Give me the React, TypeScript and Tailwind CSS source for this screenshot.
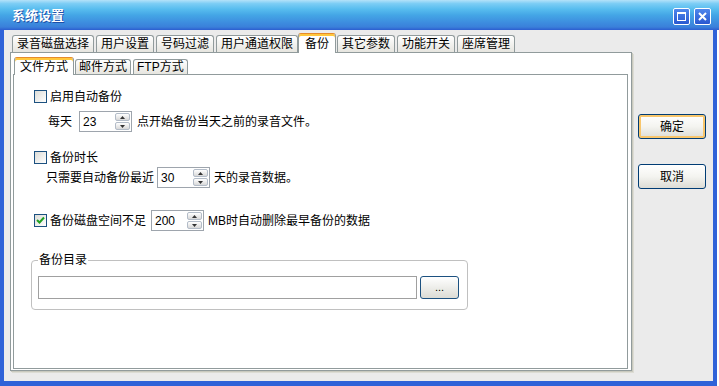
import React from "react";

function Tab({ label, active, inner }: { label: string; active?: boolean; inner?: boolean }) {
  if (active) {
    return (
      <div
        className={`relative z-10 -mb-[1px] -ml-[2px] -mr-[1px] bg-white border border-b-0 border-[#919b9c] border-t-[#e68b2c] rounded-t-[3px] shadow-[inset_0_2px_0_#ffc73c] text-[12px] text-black whitespace-nowrap ${
          inner ? "h-[18px] leading-[18px] px-[5px]" : "h-[20px] leading-[20px] px-[6px]"
        }`}
      >
        {label}
      </div>
    );
  }
  return (
    <div
      className={`border border-b-0 border-[#919b9c] rounded-t-[3px] bg-linear-to-b from-white to-[#e6e5df] text-[12px] text-black whitespace-nowrap ${
        inner ? "h-[15px] leading-[15px] px-[3px]" : "h-[17px] leading-[17px] px-[4px]"
      }`}
    >
      {label}
    </div>
  );
}

function CheckBox({ checked }: { checked?: boolean }) {
  return (
    <div className="w-[13px] h-[13px] shrink-0 border border-[#1c5180] bg-linear-to-br from-[#dcdcd7] to-white flex items-center justify-center">
      {checked && (
        <svg width="9" height="9" viewBox="0 0 9 9">
          <path d="M1 4 L3.5 6.5 L8 1.5" stroke="#21a121" strokeWidth="2" fill="none" />
        </svg>
      )}
    </div>
  );
}

function Spin({ value, width }: { value: string; width: string }) {
  return (
    <div className={`${width} h-[21px] shrink-0 border border-[#9ea5ad] bg-white flex items-center justify-between pl-[3px] pr-[1px]`}>
      <span className="text-[12px] leading-[14px] font-['Liberation_Sans',sans-serif]">{value}</span>
      <div className="flex flex-col gap-[1px]">
        {[0, 1].map((i) => (
          <div
            key={i}
            className="w-[15px] h-[8px] border border-[#b3bcc8] rounded-[2px] bg-linear-to-b from-white to-[#d8d8d8] flex items-center justify-center"
          >
            <svg width="5" height="3" viewBox="0 0 5 3">
              <path d={i === 0 ? "M0 3 L2.5 0 L5 3 Z" : "M0 0 L2.5 3 L5 0 Z"} fill="#333" />
            </svg>
          </div>
        ))}
      </div>
    </div>
  );
}

function XpButton({ label, isDefault }: { label: string; isDefault?: boolean }) {
  return (
    <button
      className={`w-[68px] h-[25px] border border-[#003c74] rounded-[3px] bg-linear-to-b from-white via-[#f4f4f0] to-[#dcdcd5] text-[12px] text-black ${
        isDefault ? "shadow-[inset_0_0_0_2px_#f8c66c]" : ""
      }`}
    >
      {label}
    </button>
  );
}

export default function App() {
  const outerTabs = ["录音磁盘选择", "用户设置", "号码过滤", "用户通道权限", "备份", "其它参数", "功能开关", "座席管理"];
  const innerTabs = ["文件方式", "邮件方式", "FTP方式"];

  return (
    <div className="w-[719px] h-[386px] bg-white overflow-hidden font-['Liberation_Sans','Noto_Sans_CJK_SC',sans-serif] text-[12px] leading-[14px] text-black">
      {/* title bar */}
      <div className="h-[30px] w-full flex items-center justify-between pl-[12px] pr-[8px] bg-[linear-gradient(to_bottom,#b4e2f9_0%,#7ccdf5_12%,#58bdef_30%,#44a6e6_50%,#3d8ddf_75%,#3a80da_90%,#2c5dd0_100%)]">
        <span className="text-white font-bold text-[13px] mt-[2px] [text-shadow:1px_1px_0_#1e4fa8]">系统设置</span>
        <div className="flex gap-[4px] mt-[2px]">
          <div className="w-[17px] h-[17px] border border-white rounded-[2px] bg-linear-to-b from-[#4f86ec] to-[#2a58d0] flex items-center justify-center">
            <div className="w-[9px] h-[9px] border border-white border-t-2" />
          </div>
          <div className="w-[17px] h-[17px] border border-white rounded-[2px] bg-linear-to-b from-[#4f86ec] to-[#2a58d0] flex items-center justify-center">
            <svg width="9" height="9" viewBox="0 0 9 9">
              <path d="M1 1 L8 8 M8 1 L1 8" stroke="white" strokeWidth="2" />
            </svg>
          </div>
        </div>
      </div>

      {/* window frame */}
      <div className="w-[717px] h-[356px] bg-[#2f62d8] px-[4px] pb-[5px]">
        <div className="h-full bg-[#ebebeb] flex">
          {/* left: tab control */}
          <div className="pl-[6px] pt-[3px]">
            <div className="flex items-end gap-[2px] h-[19px] pl-[2px]">
              {outerTabs.map((t) => (
                <Tab key={t} label={t} active={t === "备份"} />
              ))}
            </div>
            <div className="w-[622px] h-[319px] bg-white border border-[#919b9c] shadow-[1px_1px_0_#c9c9be,2px_2px_0_#dcdcd4] px-[2px] pt-[4px]">
              <div className="flex items-end gap-[2px] h-[17px] pl-[3px]">
                {innerTabs.map((t) => (
                  <Tab key={t} label={t} active={t === "文件方式"} inner />
                ))}
              </div>
              <div className="w-[615px] h-[295px] border border-[#919b9c] bg-white pl-[20px] pt-[15px]">
                <div className="flex items-center gap-[3px] h-[13px]">
                  <CheckBox />
                  <span>启用自动备份</span>
                </div>
                <div className="flex items-center h-[21px] mt-[8px] pl-[14px]">
                  <span>每天</span>
                  <div className="ml-[7px]">
                    <Spin value="23" width="w-[53px]" />
                  </div>
                  <span className="ml-[5px]">点开始备份当天之前的录音文件。</span>
                </div>

                <div className="flex items-center gap-[3px] h-[13px] mt-[19px]">
                  <CheckBox />
                  <span>备份时长</span>
                </div>
                <div className="flex items-center h-[21px] mt-[3px] pl-[12px]">
                  <span>只需要自动备份最近</span>
                  <div className="ml-[3px]">
                    <Spin value="30" width="w-[53px]" />
                  </div>
                  <span className="ml-[4px]">天的录音数据。</span>
                </div>

                <div className="flex items-center h-[21px] mt-[22px]">
                  <CheckBox checked />
                  <span className="ml-[3px]">备份磁盘空间不足</span>
                  <div className="ml-[5px]">
                    <Spin value="200" width="w-[53px]" />
                  </div>
                  <span className="ml-[4px]">MB时自动删除最早备份的数据</span>
                </div>

                <fieldset className="mt-[23px] -ml-[3px] w-[437px] border border-[#c0c0c0] rounded-[4px] pl-[6px] pt-[10px] pb-[10px]">
                  <legend className="px-[1px] leading-[12px]">备份目录</legend>
                  <div className="flex items-center gap-[3px]">
                    <div className="w-[379px] h-[23px] border border-[#a0a0a0] bg-white" />
                    <button className="w-[39px] h-[23px] border border-[#1c5180] rounded-[3px] bg-linear-to-b from-white to-[#dcdcd5] text-[11px] leading-[10px] pb-[2px] font-['Liberation_Sans',sans-serif]">
                      ...
                    </button>
                  </div>
                </fieldset>
              </div>
            </div>
          </div>

          {/* right: buttons */}
          <div className="flex flex-col gap-[25px] pl-[6px] pt-[84px]">
            <XpButton label="确定" isDefault />
            <XpButton label="取消" />
          </div>
        </div>
      </div>
    </div>
  );
}
